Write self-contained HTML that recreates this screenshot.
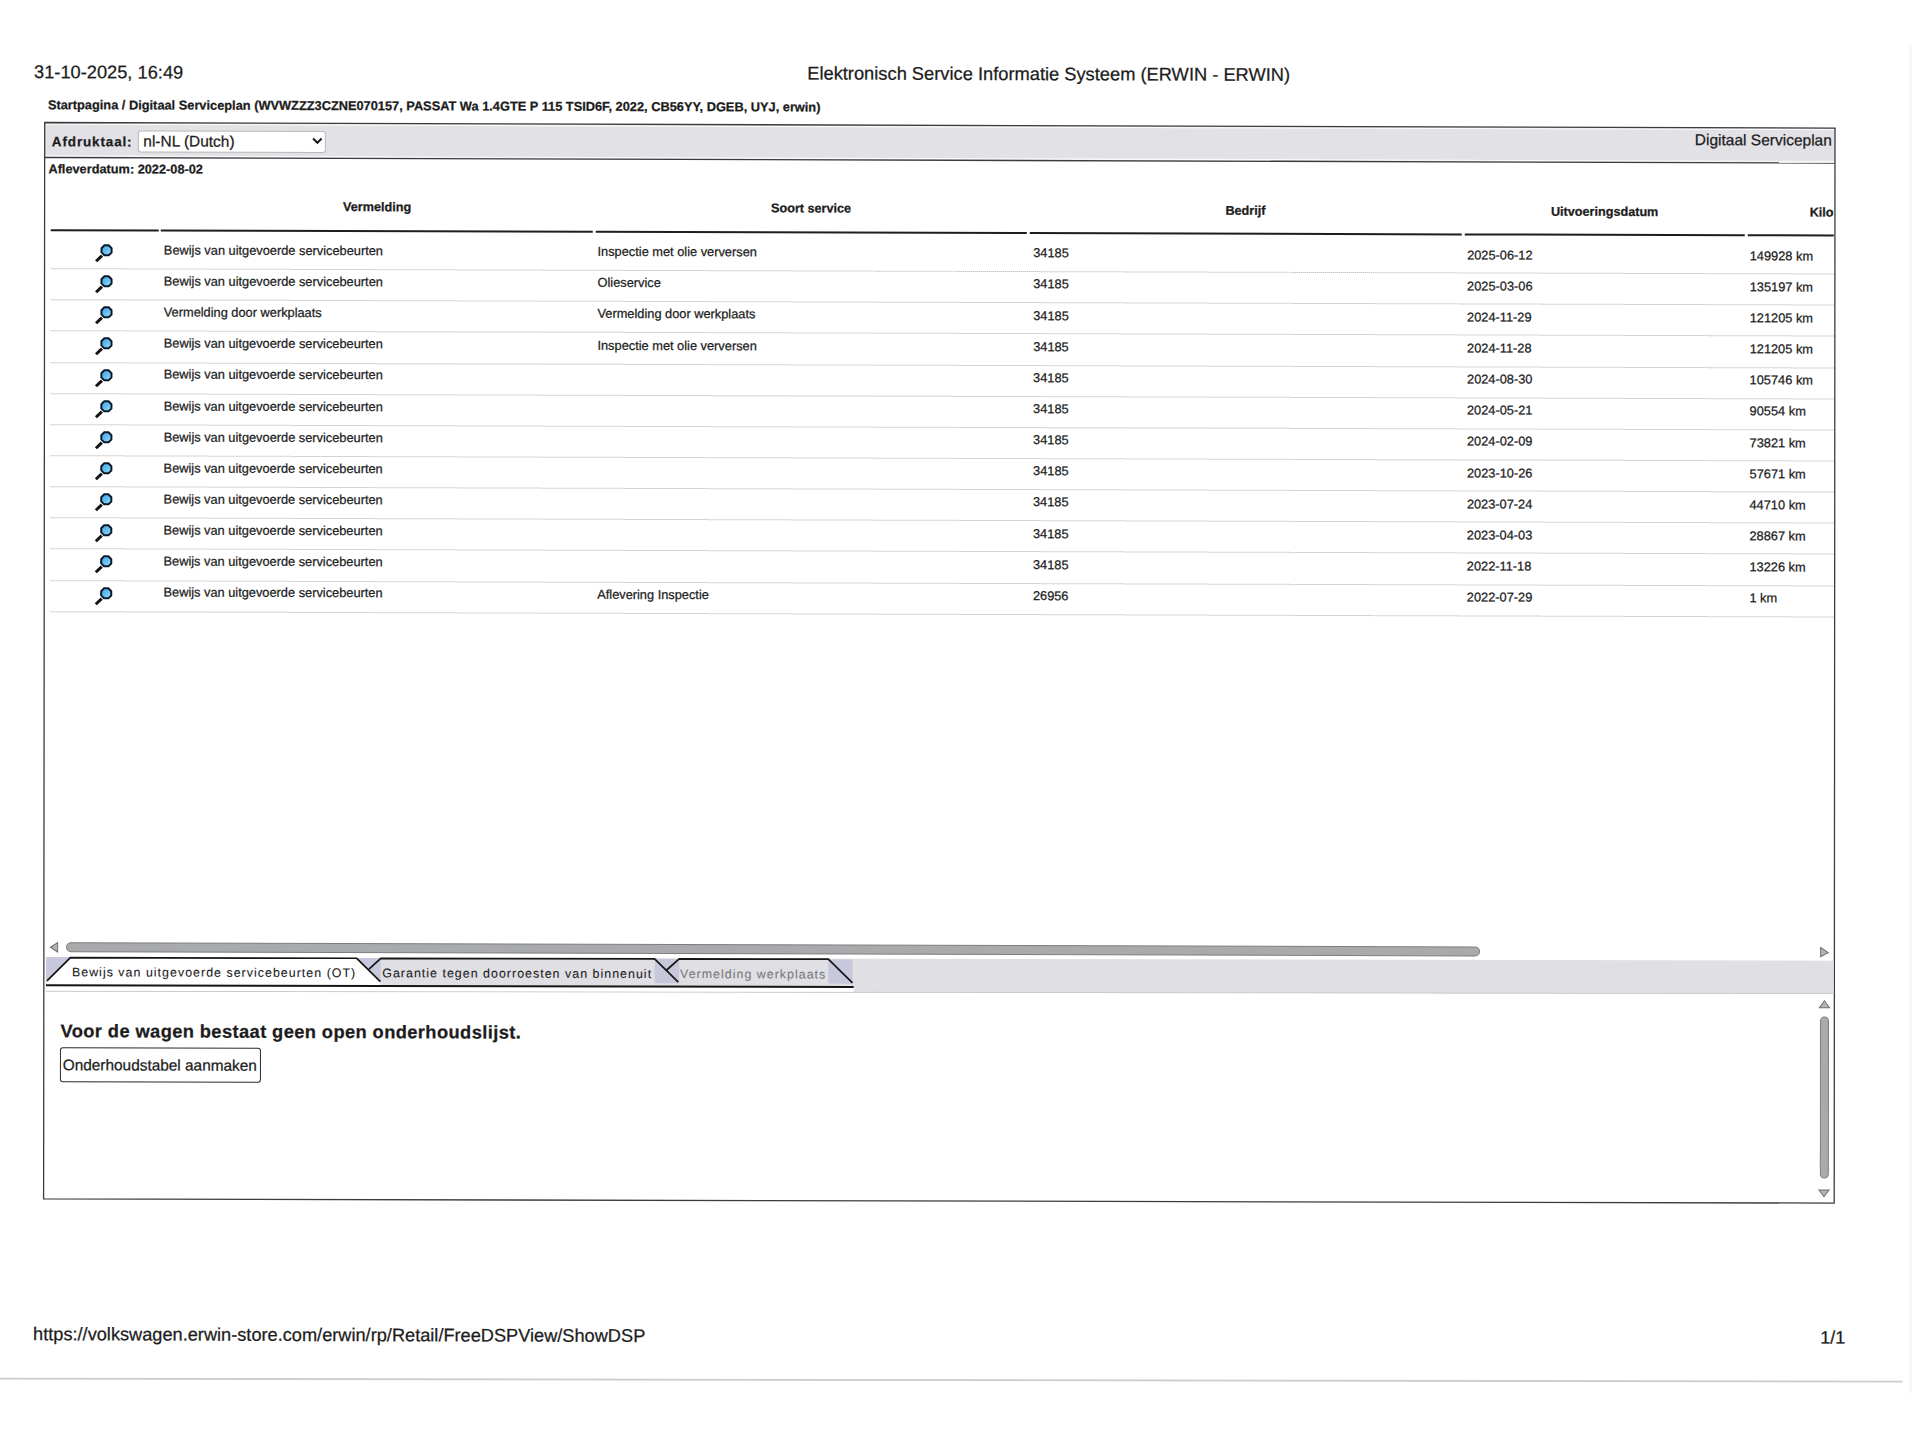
<!DOCTYPE html>
<html><head><meta charset="utf-8"><title>Digitaal Serviceplan</title>
<style>
html,body{margin:0;padding:0;background:#fff;width:1920px;height:1440px;overflow:hidden;}
#pg{position:absolute;left:0;top:0;width:1920px;height:1440px;transform-origin:0 0;transform:matrix(1,0.003,-0.001,1,0,0);}
.t{position:absolute;white-space:nowrap;line-height:1;font-family:"Liberation Sans", sans-serif;-webkit-text-stroke:0.25px currentColor;}
</style></head><body>
<div style="position:absolute;left:1909px;top:45px;width:3px;height:1348px;background:#f6f6f6"></div>
<div id="pg">
<div class="t" style="left:34.10px;top:62.95px;font-size:18.25px;font-weight:normal;color:#1c1c1c;">31-10-2025, 16:49</div>
<div class="t" style="left:807.30px;top:61.81px;font-size:18.3px;font-weight:normal;color:#1c1c1c;">Elektronisch Service Informatie Systeem (ERWIN - ERWIN)</div>
<div class="t" style="left:48.00px;top:98.56px;font-size:12.8px;font-weight:bold;color:#1c1c1c;">Startpagina / Digitaal Serviceplan (WVWZZZ3CZNE070157, PASSAT Wa 1.4GTE P 115 TSID6F, 2022, CB56YY, DGEB, UYJ, erwin)</div>
<svg style="position:absolute;left:0;top:0;overflow:visible" width="1920" height="1300"><polygon points="44.82,122.37 1835.13,122.6 1835.2,157.5 44.8,157.37" fill="#e1e1e6"/><line x1="45.5" y1="124.0" x2="1834.5" y2="124.23" stroke="#fbfbfc" stroke-width="1.1"/><line x1="45.5" y1="155.75" x2="1834.5" y2="155.88" stroke="#fbfbfc" stroke-width="1.1"/><line x1="44.8" y1="157.37" x2="1835.2" y2="157.5" stroke="#3c3c3c" stroke-width="1.3"/><polygon points="44.82,122.37 1835.13,122.6 1835.4,1197.6 44.8,1198.77" fill="none" stroke="#3c3c3c" stroke-width="1.3"/></svg>
<div class="t" style="left:52.00px;top:134.67px;font-size:13.5px;font-weight:bold;color:#1c1c1c;letter-spacing:0.85px;">Afdruktaal:</div>
<div style="position:absolute;left:137.60px;top:130.40px;width:188.50px;height:21.40px;background:#fff;border:1px solid #b9b9b9;border-radius:3px;box-sizing:border-box;"></div>
<div class="t" style="left:143.50px;top:133.12px;font-size:15.45px;font-weight:normal;color:#1c1c1c;">nl-NL (Dutch)</div>
<svg style="position:absolute;left:311.5px;top:136.2px" width="11" height="8" viewBox="0 0 11 8"><path d="M1.2 1.5 L5.5 5.8 L9.8 1.5" fill="none" stroke="#1c1c1c" stroke-width="2"/></svg>
<div class="t" style="right:88.00px;top:126.98px;font-size:15.5px;font-weight:normal;color:#1c1c1c;">Digitaal Serviceplan</div>
<div class="t" style="left:48.60px;top:163.21px;font-size:12.75px;font-weight:bold;color:#1c1c1c;">Afleverdatum: 2022-08-02</div>
<div class="t" style="left:77.30px;width:600px;text-align:center;top:199.89px;font-size:12.65px;font-weight:bold;color:#1c1c1c;">Vermelding</div>
<div class="t" style="left:511.30px;width:600px;text-align:center;top:200.24px;font-size:12.65px;font-weight:bold;color:#1c1c1c;">Soort service</div>
<div class="t" style="left:945.70px;width:600px;text-align:center;top:200.59px;font-size:12.65px;font-weight:bold;color:#1c1c1c;">Bedrijf</div>
<div class="t" style="left:1304.85px;width:600px;text-align:center;top:200.87px;font-size:12.65px;font-weight:bold;color:#1c1c1c;">Uitvoeringsdatum</div>
<div style="position:absolute;left:1747.6px;top:196.04px;width:86.40px;height:30px;overflow:hidden"><div class="t" style="left:62.30px;top:5px;font-size:12.65px;font-weight:bold;color:#1c1c1c">Kilometerstand</div></div>
<div style="position:absolute;left:51.20px;top:229.30px;width:107.70px;height:2.00px;background:#1e1e1e;"></div>
<div style="position:absolute;left:161.40px;top:229.30px;width:431.80px;height:2.00px;background:#1e1e1e;"></div>
<div style="position:absolute;left:595.70px;top:229.30px;width:431.20px;height:2.00px;background:#1e1e1e;"></div>
<div style="position:absolute;left:1029.50px;top:229.30px;width:432.40px;height:2.00px;background:#1e1e1e;"></div>
<div style="position:absolute;left:1464.50px;top:229.30px;width:280.70px;height:2.00px;background:#1e1e1e;"></div>
<div style="position:absolute;left:1747.60px;top:229.30px;width:86.80px;height:2.00px;background:#1e1e1e;"></div>
<svg width="0" height="0" style="position:absolute"><defs><linearGradient id="mg" x1="0" y1="0" x2="1" y2="1"><stop offset="0" stop-color="#4aa6e6"/><stop offset="0.55" stop-color="#66c0f2"/><stop offset="1" stop-color="#b4ecfc"/></linearGradient></defs></svg>
<div class="t" style="left:164.10px;top:243.87px;font-size:12.8px;font-weight:normal;color:#1c1c1c;">Bewijs van uitgevoerde servicebeurten</div>
<div class="t" style="left:597.80px;top:244.10px;font-size:12.8px;font-weight:normal;color:#1c1c1c;">Inspectie met olie verversen</div>
<div class="t" style="left:1033.50px;top:244.34px;font-size:12.8px;font-weight:normal;color:#1c1c1c;">34185</div>
<div class="t" style="left:1467.40px;top:244.58px;font-size:12.8px;font-weight:normal;color:#1c1c1c;">2025-06-12</div>
<div class="t" style="left:1750.00px;top:244.74px;font-size:12.8px;font-weight:normal;color:#1c1c1c;">149928 km</div>
<div style="position:absolute;left:93.60px;top:242.98px;width:22px;height:20px"><svg width="22" height="20" viewBox="0 0 22 20"><line x1="2.36" y1="17.98" x2="8.3" y2="12.3" stroke="#121212" stroke-width="3.0" stroke-linecap="butt"/><polygon points="17.84,9.09 14.89,12.04 10.71,12.04 7.76,9.09 7.76,4.91 10.71,1.96 14.89,1.96 17.84,4.91" fill="url(#mg)" stroke="#0a1a28" stroke-width="2" stroke-linejoin="round"/></svg></div>
<div style="position:absolute;left:51.20px;top:268.10px;width:1783.20px;height:1.00px;border-top:1px dotted #a9a9a9;box-sizing:border-box;"></div>
<div class="t" style="left:164.10px;top:275.01px;font-size:12.8px;font-weight:normal;color:#1c1c1c;">Bewijs van uitgevoerde servicebeurten</div>
<div class="t" style="left:597.80px;top:275.24px;font-size:12.8px;font-weight:normal;color:#1c1c1c;">Olieservice</div>
<div class="t" style="left:1033.50px;top:275.48px;font-size:12.8px;font-weight:normal;color:#1c1c1c;">34185</div>
<div class="t" style="left:1467.40px;top:275.72px;font-size:12.8px;font-weight:normal;color:#1c1c1c;">2025-03-06</div>
<div class="t" style="left:1750.00px;top:275.88px;font-size:12.8px;font-weight:normal;color:#1c1c1c;">135197 km</div>
<div style="position:absolute;left:93.60px;top:274.12px;width:22px;height:20px"><svg width="22" height="20" viewBox="0 0 22 20"><line x1="2.36" y1="17.98" x2="8.3" y2="12.3" stroke="#121212" stroke-width="3.0" stroke-linecap="butt"/><polygon points="17.84,9.09 14.89,12.04 10.71,12.04 7.76,9.09 7.76,4.91 10.71,1.96 14.89,1.96 17.84,4.91" fill="url(#mg)" stroke="#0a1a28" stroke-width="2" stroke-linejoin="round"/></svg></div>
<div style="position:absolute;left:51.20px;top:299.24px;width:1783.20px;height:1.00px;border-top:1px dotted #a9a9a9;box-sizing:border-box;"></div>
<div class="t" style="left:164.10px;top:306.15px;font-size:12.8px;font-weight:normal;color:#1c1c1c;">Vermelding door werkplaats</div>
<div class="t" style="left:597.80px;top:306.38px;font-size:12.8px;font-weight:normal;color:#1c1c1c;">Vermelding door werkplaats</div>
<div class="t" style="left:1033.50px;top:306.62px;font-size:12.8px;font-weight:normal;color:#1c1c1c;">34185</div>
<div class="t" style="left:1467.40px;top:306.86px;font-size:12.8px;font-weight:normal;color:#1c1c1c;">2024-11-29</div>
<div class="t" style="left:1750.00px;top:307.02px;font-size:12.8px;font-weight:normal;color:#1c1c1c;">121205 km</div>
<div style="position:absolute;left:93.60px;top:305.26px;width:22px;height:20px"><svg width="22" height="20" viewBox="0 0 22 20"><line x1="2.36" y1="17.98" x2="8.3" y2="12.3" stroke="#121212" stroke-width="3.0" stroke-linecap="butt"/><polygon points="17.84,9.09 14.89,12.04 10.71,12.04 7.76,9.09 7.76,4.91 10.71,1.96 14.89,1.96 17.84,4.91" fill="url(#mg)" stroke="#0a1a28" stroke-width="2" stroke-linejoin="round"/></svg></div>
<div style="position:absolute;left:51.20px;top:330.38px;width:1783.20px;height:1.00px;border-top:1px dotted #a9a9a9;box-sizing:border-box;"></div>
<div class="t" style="left:164.10px;top:337.29px;font-size:12.8px;font-weight:normal;color:#1c1c1c;">Bewijs van uitgevoerde servicebeurten</div>
<div class="t" style="left:597.80px;top:337.52px;font-size:12.8px;font-weight:normal;color:#1c1c1c;">Inspectie met olie verversen</div>
<div class="t" style="left:1033.50px;top:337.76px;font-size:12.8px;font-weight:normal;color:#1c1c1c;">34185</div>
<div class="t" style="left:1467.40px;top:338.00px;font-size:12.8px;font-weight:normal;color:#1c1c1c;">2024-11-28</div>
<div class="t" style="left:1750.00px;top:338.16px;font-size:12.8px;font-weight:normal;color:#1c1c1c;">121205 km</div>
<div style="position:absolute;left:93.60px;top:336.40px;width:22px;height:20px"><svg width="22" height="20" viewBox="0 0 22 20"><line x1="2.36" y1="17.98" x2="8.3" y2="12.3" stroke="#121212" stroke-width="3.0" stroke-linecap="butt"/><polygon points="17.84,9.09 14.89,12.04 10.71,12.04 7.76,9.09 7.76,4.91 10.71,1.96 14.89,1.96 17.84,4.91" fill="url(#mg)" stroke="#0a1a28" stroke-width="2" stroke-linejoin="round"/></svg></div>
<div style="position:absolute;left:51.20px;top:361.52px;width:1783.20px;height:1.00px;border-top:1px dotted #a9a9a9;box-sizing:border-box;"></div>
<div class="t" style="left:164.10px;top:368.43px;font-size:12.8px;font-weight:normal;color:#1c1c1c;">Bewijs van uitgevoerde servicebeurten</div>
<div class="t" style="left:1033.50px;top:368.90px;font-size:12.8px;font-weight:normal;color:#1c1c1c;">34185</div>
<div class="t" style="left:1467.40px;top:369.14px;font-size:12.8px;font-weight:normal;color:#1c1c1c;">2024-08-30</div>
<div class="t" style="left:1750.00px;top:369.30px;font-size:12.8px;font-weight:normal;color:#1c1c1c;">105746 km</div>
<div style="position:absolute;left:93.60px;top:367.54px;width:22px;height:20px"><svg width="22" height="20" viewBox="0 0 22 20"><line x1="2.36" y1="17.98" x2="8.3" y2="12.3" stroke="#121212" stroke-width="3.0" stroke-linecap="butt"/><polygon points="17.84,9.09 14.89,12.04 10.71,12.04 7.76,9.09 7.76,4.91 10.71,1.96 14.89,1.96 17.84,4.91" fill="url(#mg)" stroke="#0a1a28" stroke-width="2" stroke-linejoin="round"/></svg></div>
<div style="position:absolute;left:51.20px;top:392.66px;width:1783.20px;height:1.00px;border-top:1px dotted #a9a9a9;box-sizing:border-box;"></div>
<div class="t" style="left:164.10px;top:399.57px;font-size:12.8px;font-weight:normal;color:#1c1c1c;">Bewijs van uitgevoerde servicebeurten</div>
<div class="t" style="left:1033.50px;top:400.04px;font-size:12.8px;font-weight:normal;color:#1c1c1c;">34185</div>
<div class="t" style="left:1467.40px;top:400.28px;font-size:12.8px;font-weight:normal;color:#1c1c1c;">2024-05-21</div>
<div class="t" style="left:1750.00px;top:400.44px;font-size:12.8px;font-weight:normal;color:#1c1c1c;">90554 km</div>
<div style="position:absolute;left:93.60px;top:398.68px;width:22px;height:20px"><svg width="22" height="20" viewBox="0 0 22 20"><line x1="2.36" y1="17.98" x2="8.3" y2="12.3" stroke="#121212" stroke-width="3.0" stroke-linecap="butt"/><polygon points="17.84,9.09 14.89,12.04 10.71,12.04 7.76,9.09 7.76,4.91 10.71,1.96 14.89,1.96 17.84,4.91" fill="url(#mg)" stroke="#0a1a28" stroke-width="2" stroke-linejoin="round"/></svg></div>
<div style="position:absolute;left:51.20px;top:423.80px;width:1783.20px;height:1.00px;border-top:1px dotted #a9a9a9;box-sizing:border-box;"></div>
<div class="t" style="left:164.10px;top:430.71px;font-size:12.8px;font-weight:normal;color:#1c1c1c;">Bewijs van uitgevoerde servicebeurten</div>
<div class="t" style="left:1033.50px;top:431.18px;font-size:12.8px;font-weight:normal;color:#1c1c1c;">34185</div>
<div class="t" style="left:1467.40px;top:431.42px;font-size:12.8px;font-weight:normal;color:#1c1c1c;">2024-02-09</div>
<div class="t" style="left:1750.00px;top:431.58px;font-size:12.8px;font-weight:normal;color:#1c1c1c;">73821 km</div>
<div style="position:absolute;left:93.60px;top:429.82px;width:22px;height:20px"><svg width="22" height="20" viewBox="0 0 22 20"><line x1="2.36" y1="17.98" x2="8.3" y2="12.3" stroke="#121212" stroke-width="3.0" stroke-linecap="butt"/><polygon points="17.84,9.09 14.89,12.04 10.71,12.04 7.76,9.09 7.76,4.91 10.71,1.96 14.89,1.96 17.84,4.91" fill="url(#mg)" stroke="#0a1a28" stroke-width="2" stroke-linejoin="round"/></svg></div>
<div style="position:absolute;left:51.20px;top:454.94px;width:1783.20px;height:1.00px;border-top:1px dotted #a9a9a9;box-sizing:border-box;"></div>
<div class="t" style="left:164.10px;top:461.85px;font-size:12.8px;font-weight:normal;color:#1c1c1c;">Bewijs van uitgevoerde servicebeurten</div>
<div class="t" style="left:1033.50px;top:462.32px;font-size:12.8px;font-weight:normal;color:#1c1c1c;">34185</div>
<div class="t" style="left:1467.40px;top:462.56px;font-size:12.8px;font-weight:normal;color:#1c1c1c;">2023-10-26</div>
<div class="t" style="left:1750.00px;top:462.72px;font-size:12.8px;font-weight:normal;color:#1c1c1c;">57671 km</div>
<div style="position:absolute;left:93.60px;top:460.96px;width:22px;height:20px"><svg width="22" height="20" viewBox="0 0 22 20"><line x1="2.36" y1="17.98" x2="8.3" y2="12.3" stroke="#121212" stroke-width="3.0" stroke-linecap="butt"/><polygon points="17.84,9.09 14.89,12.04 10.71,12.04 7.76,9.09 7.76,4.91 10.71,1.96 14.89,1.96 17.84,4.91" fill="url(#mg)" stroke="#0a1a28" stroke-width="2" stroke-linejoin="round"/></svg></div>
<div style="position:absolute;left:51.20px;top:486.08px;width:1783.20px;height:1.00px;border-top:1px dotted #a9a9a9;box-sizing:border-box;"></div>
<div class="t" style="left:164.10px;top:492.99px;font-size:12.8px;font-weight:normal;color:#1c1c1c;">Bewijs van uitgevoerde servicebeurten</div>
<div class="t" style="left:1033.50px;top:493.46px;font-size:12.8px;font-weight:normal;color:#1c1c1c;">34185</div>
<div class="t" style="left:1467.40px;top:493.70px;font-size:12.8px;font-weight:normal;color:#1c1c1c;">2023-07-24</div>
<div class="t" style="left:1750.00px;top:493.86px;font-size:12.8px;font-weight:normal;color:#1c1c1c;">44710 km</div>
<div style="position:absolute;left:93.60px;top:492.10px;width:22px;height:20px"><svg width="22" height="20" viewBox="0 0 22 20"><line x1="2.36" y1="17.98" x2="8.3" y2="12.3" stroke="#121212" stroke-width="3.0" stroke-linecap="butt"/><polygon points="17.84,9.09 14.89,12.04 10.71,12.04 7.76,9.09 7.76,4.91 10.71,1.96 14.89,1.96 17.84,4.91" fill="url(#mg)" stroke="#0a1a28" stroke-width="2" stroke-linejoin="round"/></svg></div>
<div style="position:absolute;left:51.20px;top:517.22px;width:1783.20px;height:1.00px;border-top:1px dotted #a9a9a9;box-sizing:border-box;"></div>
<div class="t" style="left:164.10px;top:524.13px;font-size:12.8px;font-weight:normal;color:#1c1c1c;">Bewijs van uitgevoerde servicebeurten</div>
<div class="t" style="left:1033.50px;top:524.60px;font-size:12.8px;font-weight:normal;color:#1c1c1c;">34185</div>
<div class="t" style="left:1467.40px;top:524.84px;font-size:12.8px;font-weight:normal;color:#1c1c1c;">2023-04-03</div>
<div class="t" style="left:1750.00px;top:525.00px;font-size:12.8px;font-weight:normal;color:#1c1c1c;">28867 km</div>
<div style="position:absolute;left:93.60px;top:523.24px;width:22px;height:20px"><svg width="22" height="20" viewBox="0 0 22 20"><line x1="2.36" y1="17.98" x2="8.3" y2="12.3" stroke="#121212" stroke-width="3.0" stroke-linecap="butt"/><polygon points="17.84,9.09 14.89,12.04 10.71,12.04 7.76,9.09 7.76,4.91 10.71,1.96 14.89,1.96 17.84,4.91" fill="url(#mg)" stroke="#0a1a28" stroke-width="2" stroke-linejoin="round"/></svg></div>
<div style="position:absolute;left:51.20px;top:548.36px;width:1783.20px;height:1.00px;border-top:1px dotted #a9a9a9;box-sizing:border-box;"></div>
<div class="t" style="left:164.10px;top:555.27px;font-size:12.8px;font-weight:normal;color:#1c1c1c;">Bewijs van uitgevoerde servicebeurten</div>
<div class="t" style="left:1033.50px;top:555.74px;font-size:12.8px;font-weight:normal;color:#1c1c1c;">34185</div>
<div class="t" style="left:1467.40px;top:555.98px;font-size:12.8px;font-weight:normal;color:#1c1c1c;">2022-11-18</div>
<div class="t" style="left:1750.00px;top:556.14px;font-size:12.8px;font-weight:normal;color:#1c1c1c;">13226 km</div>
<div style="position:absolute;left:93.60px;top:554.38px;width:22px;height:20px"><svg width="22" height="20" viewBox="0 0 22 20"><line x1="2.36" y1="17.98" x2="8.3" y2="12.3" stroke="#121212" stroke-width="3.0" stroke-linecap="butt"/><polygon points="17.84,9.09 14.89,12.04 10.71,12.04 7.76,9.09 7.76,4.91 10.71,1.96 14.89,1.96 17.84,4.91" fill="url(#mg)" stroke="#0a1a28" stroke-width="2" stroke-linejoin="round"/></svg></div>
<div style="position:absolute;left:51.20px;top:579.50px;width:1783.20px;height:1.00px;border-top:1px dotted #a9a9a9;box-sizing:border-box;"></div>
<div class="t" style="left:164.10px;top:586.41px;font-size:12.8px;font-weight:normal;color:#1c1c1c;">Bewijs van uitgevoerde servicebeurten</div>
<div class="t" style="left:597.80px;top:586.64px;font-size:12.8px;font-weight:normal;color:#1c1c1c;">Aflevering Inspectie</div>
<div class="t" style="left:1033.50px;top:586.88px;font-size:12.8px;font-weight:normal;color:#1c1c1c;">26956</div>
<div class="t" style="left:1467.40px;top:587.12px;font-size:12.8px;font-weight:normal;color:#1c1c1c;">2022-07-29</div>
<div class="t" style="left:1750.00px;top:587.28px;font-size:12.8px;font-weight:normal;color:#1c1c1c;">1 km</div>
<div style="position:absolute;left:93.60px;top:585.52px;width:22px;height:20px"><svg width="22" height="20" viewBox="0 0 22 20"><line x1="2.36" y1="17.98" x2="8.3" y2="12.3" stroke="#121212" stroke-width="3.0" stroke-linecap="butt"/><polygon points="17.84,9.09 14.89,12.04 10.71,12.04 7.76,9.09 7.76,4.91 10.71,1.96 14.89,1.96 17.84,4.91" fill="url(#mg)" stroke="#0a1a28" stroke-width="2" stroke-linejoin="round"/></svg></div>
<div style="position:absolute;left:51.20px;top:610.64px;width:1783.20px;height:1.00px;border-top:1px dotted #a9a9a9;box-sizing:border-box;"></div>
<svg style="position:absolute;left:50px;top:940px" width="10" height="14" viewBox="0 0 10 14"><polygon points="1.3,7.1 8.6,2.4 8.6,11.8" fill="#b3b3b3" stroke="#6e6e6e" stroke-width="1"/></svg>
<div style="position:absolute;left:66.70px;top:941.90px;width:1414.15px;height:10.00px;background:#a9aaac;border:1px solid #7e7e80;border-radius:5px;box-sizing:border-box;"></div>
<svg style="position:absolute;left:1819.5px;top:940px" width="10" height="14" viewBox="0 0 10 14"><polygon points="9.2,7.1 1.6,2.0 1.6,11.2" fill="#b3b3b3" stroke="#6e6e6e" stroke-width="1"/></svg>
<svg style="position:absolute;left:40.0px;top:945.0px" width="1800" height="55"><polygon points="6.70,12.10 1794.60,10.15 1794.60,43.10 6.70,46.00" fill="#dfdfe4"/><line x1="6.70" y1="46.00" x2="1794.60" y2="43.10" stroke="#cacace" stroke-width="1"/><polygon points="6.70,40.00 814.70,39.20 814.70,44.20 6.70,45.50" fill="#ffffff"/><rect x="7.20" y="11.90" width="24.16" height="24.40" fill="#c8c8dc"/><rect x="317.66" y="11.90" width="24.10" height="24.40" fill="#c8c8dc"/><rect x="615.56" y="11.90" width="24.60" height="24.40" fill="#c8c8dc"/><rect x="789.26" y="11.90" width="24.20" height="24.40" fill="#c8c8dc"/><polygon points="7.96,35.66 31.36,12.40 317.66,12.20 341.36,35.56 341.36,39.60 7.96,40.20" fill="#ffffff"/><polyline points="7.96,35.66 31.36,12.40 317.66,12.20 341.36,35.56" stroke="#151515" stroke-width="1.7" fill="none" stroke-linejoin="miter"/><polyline points="329.96,22.90 341.76,12.15 615.56,11.95 639.26,35.07" stroke="#151515" stroke-width="1.7" fill="none" stroke-linejoin="miter"/><polyline points="627.66,23.00 640.16,11.90 789.26,11.70 813.46,35.34" stroke="#151515" stroke-width="1.7" fill="none" stroke-linejoin="miter"/><line x1="7.00" y1="40.20" x2="814.70" y2="39.40" stroke="#151515" stroke-width="2"/></svg>
<div class="t" style="left:72.90px;top:965.60px;font-size:12.4px;font-weight:normal;color:#1c1c1c;letter-spacing:1.03px;-webkit-text-stroke:0.1px currentColor;">Bewijs van uitgevoerde servicebeurten (OT)</div>
<div class="t" style="left:383.20px;top:965.60px;font-size:12.4px;font-weight:normal;color:#1c1c1c;letter-spacing:1.03px;-webkit-text-stroke:0.1px currentColor;">Garantie tegen doorroesten van binnenuit</div>
<div class="t" style="left:681.00px;top:965.60px;font-size:12.4px;font-weight:normal;color:#7a7a7a;letter-spacing:1.03px;-webkit-text-stroke:0.1px currentColor;">Vermelding werkplaats</div>
<svg style="position:absolute;left:1818px;top:993px" width="14" height="11" viewBox="0 0 14 11"><polygon points="7.4,2.3 2.4,9.3 12.6,9.3" fill="#b3b3b3" stroke="#6e6e6e" stroke-width="1"/></svg>
<div style="position:absolute;left:1821.00px;top:1011.00px;width:9.30px;height:161.50px;background:#a9aaac;border:1px solid #7e7e80;border-radius:5px;box-sizing:border-box;"></div>
<svg style="position:absolute;left:1818px;top:1182px" width="14" height="11" viewBox="0 0 14 11"><polygon points="7.2,9.2 2.2,2.5 12.2,2.5" fill="#b3b3b3" stroke="#6e6e6e" stroke-width="1"/></svg>
<div class="t" style="left:61.50px;top:1022.31px;font-size:18.3px;font-weight:bold;color:#1c1c1c;letter-spacing:0.4px;">Voor de wagen bestaat geen open onderhoudslijst.</div>
<div style="position:absolute;left:61.35px;top:1047.30px;width:200.30px;height:34.70px;border:1.4px solid #2a2a2a;border-radius:3px;box-sizing:border-box;background:#fff;"></div>
<div class="t" style="left:63.75px;top:1057.06px;font-size:15.4px;font-weight:normal;color:#1c1c1c;">Onderhoudstabel aanmaken</div>
<div class="t" style="left:34.40px;top:1325.29px;font-size:18.2px;font-weight:normal;color:#1c1c1c;">https://volkswagen.erwin-store.com/erwin/rp/Retail/FreeDSPView/ShowDSP</div>
<div class="t" style="left:1821.50px;top:1323.36px;font-size:18px;font-weight:normal;color:#1c1c1c;">1/1</div>
<svg style="position:absolute;left:0;top:1360px" width="1920" height="40"><line x1="0" y1="18.6" x2="1904" y2="15.9" stroke="#cdcdcd" stroke-width="1.8"/></svg>
</div>
</body></html>
